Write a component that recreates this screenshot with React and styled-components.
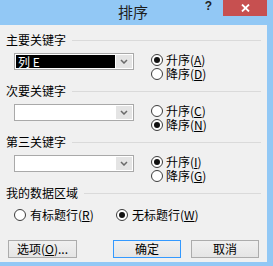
import React from "react";
import styled, { createGlobalStyle } from "styled-components";

const GlobalStyle = createGlobalStyle`
  html, body {
    margin: 0;
    padding: 0;
    background: #92c8f5;
  }
  body {
    font-family: "Noto Sans CJK SC", "Noto Sans", sans-serif;
    color: #000;
  }
`;

const Window = styled.div`
  width: 273px;
  height: 266px;
  box-sizing: border-box;
  padding: 0 6px 4px 0;
  background: #92c8f5;
  display: flex;
  flex-direction: column;
`;

const TitleBar = styled.div`
  height: 25px;
  display: flex;
  align-items: flex-start;
  flex-shrink: 0;
`;

const Title = styled.div`
  flex: 1;
  padding: 3px 0 0 63px;
  text-align: center;
  font-size: 15px;
  line-height: 17px;
  color: #1e1e1e;
`;

const Help = styled.div`
  width: 11px;
  margin-right: 9px;
  text-align: center;
  font-family: "Liberation Sans", sans-serif;
  font-weight: bold;
  font-size: 12px;
  line-height: 13px;
  color: #222;
`;

const Close = styled.div`
  width: 44px;
  height: 16px;
  background: #c75050;
  display: flex;
  align-items: center;
  justify-content: center;
`;

const Client = styled.div`
  flex: 1;
  background: #f0f0f0;
  padding: 8px 6px 0 6px;
  display: flex;
  flex-direction: column;
`;

const Header = styled.div`
  display: flex;
  align-items: center;
  height: 14px;
  font-size: 12px;
  line-height: 14px;
  &::after {
    content: "";
    flex: 1;
    height: 1px;
    margin-left: 6px;
    background: #dadada;
  }
`;

const Body = styled.div`
  display: flex;
  margin-top: 6px;
  height: 31px;
  padding-left: 8px;
`;

const Combo = styled.div`
  width: 120px;
  height: 17px;
  box-sizing: border-box;
  border: 1px solid #a9a9a9;
  background: #fff;
  padding: 1px;
  display: flex;
`;

const ComboText = styled.div`
  flex: 1;
  background: ${(p) => (p.$selected ? "#000" : "#fff")};
  color: #fff;
  font-size: 12px;
  line-height: 13px;
  padding-left: 2px;
  white-space: pre;
  margin-right: 1px;
`;

const ComboButton = styled.div`
  width: 16px;
  background: #e4e4e4;
  display: flex;
  align-items: center;
  justify-content: center;
`;

const RadioGroup = styled.div`
  margin-left: 17px;
  display: flex;
  flex-direction: column;
`;

const RadioRow = styled.label`
  display: flex;
  align-items: center;
  height: 14px;
  width: ${(p) => (p.$width ? `${p.$width}px` : "auto")};
  font-size: 12px;
  line-height: 14px;
`;

const Circle = styled.span`
  position: relative;
  width: 12px;
  height: 12px;
  box-sizing: border-box;
  border-radius: 50%;
  border: 1px solid #3c3c3c;
  background: #fff;
  margin-right: ${(p) => p.$gap || 3}px;
  flex-shrink: 0;
  &::after {
    content: "";
    display: ${(p) => (p.$checked ? "block" : "none")};
    position: absolute;
    left: 2px;
    top: 2px;
    width: 6px;
    height: 6px;
    border-radius: 50%;
    background: #111;
  }
`;

const AreaBody = styled.div`
  display: flex;
  margin-top: 8px;
  padding-left: 8px;
`;

const ButtonRow = styled.div`
  display: flex;
  margin-top: 18px;
  padding-left: 2px;
`;

const Button = styled.div`
  width: ${(p) => p.$width}px;
  height: 18px;
  margin-left: ${(p) => p.$offset || 0}px;
  box-sizing: border-box;
  border: 1px solid ${(p) => (p.$focused ? "#3399ff" : "#acacac")};
  background: linear-gradient(#f0f0f0, #e5e5e5);
  font-size: 12px;
  line-height: 16px;
  text-align: center;
  white-space: nowrap;
`;

const Chevron = () => (
  <svg width="8" height="5" viewBox="0 0 8 5">
    <path d="M1 1 L4 4 L7 1" fill="none" stroke="#6a6a6a" strokeWidth="1.5" />
  </svg>
);

const Radio = ({ checked, children, width, gap }) => (
  <RadioRow $width={width}>
    <Circle $checked={checked} $gap={gap} />
    <span>{children}</span>
  </RadioRow>
);

const KeySection = ({ title, value, asc, keys }) => (
  <>
    <Header>{title}</Header>
    <Body>
      <Combo>
        <ComboText $selected={!!value}>{value || ""}</ComboText>
        <ComboButton>
          <Chevron />
        </ComboButton>
      </Combo>
      <RadioGroup>
        <Radio checked={asc}>升序(<u>{keys[0]}</u>)</Radio>
        <Radio checked={!asc}>降序(<u>{keys[1]}</u>)</Radio>
      </RadioGroup>
    </Body>
  </>
);

export default function App() {
  return (
    <>
      <GlobalStyle />
      <Window>
        <TitleBar>
          <Title>排序</Title>
          <Help>?</Help>
          <Close>
            <svg width="9" height="8" viewBox="0 0 9 8">
              <path d="M1 0.5 L8 7.5 M8 0.5 L1 7.5" stroke="#fff" strokeWidth="1.8" />
            </svg>
          </Close>
        </TitleBar>
        <Client>
          <KeySection title="主要关键字" value="列 E" asc keys={["A", "D"]} />
          <KeySection title="次要关键字" asc={false} keys={["C", "N"]} />
          <KeySection title="第三关键字" asc keys={["I", "G"]} />
          <Header>我的数据区域</Header>
          <AreaBody>
            <Radio width={102} gap={4}>有标题行(<u>R</u>)</Radio>
            <Radio checked gap={4}>无标题行(<u>W</u>)</Radio>
          </AreaBody>
          <ButtonRow>
            <Button $width={69}>选项(<u>O</u>)...</Button>
            <Button $width={68} $offset={36} $focused>确定</Button>
            <Button $width={68} $offset={10}>取消</Button>
          </ButtonRow>
        </Client>
      </Window>
    </>
  );
}
